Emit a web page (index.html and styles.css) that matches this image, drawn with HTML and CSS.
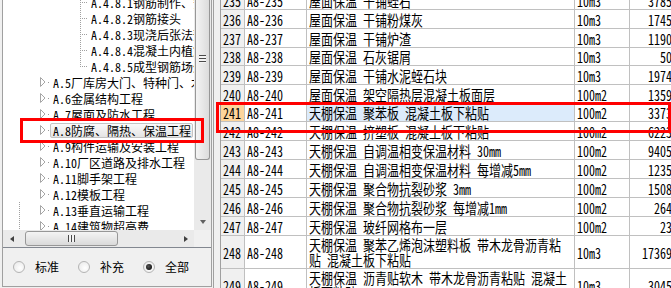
FILE: index.html
```html
<!DOCTYPE html>
<html lang="zh-CN">
<head>
  <meta charset="UTF-8" />
  <title>定额库</title>
  <link rel="stylesheet" href="styles.css">
</head>
<body>

<div class="app">
  <aside class="side">
    <div class="side-box">
      <div class="tree">
        <div class="tree-view">
          <ul class="tree-list">
            <li class="lv3"><i class="join"></i><span class="label">A.4.8.1钢筋制作、安装</span></li>
            <li class="lv3"><i class="join"></i><span class="label">A.4.8.2钢筋接头</span></li>
            <li class="lv3"><i class="join"></i><span class="label">A.4.8.3现浇后张法预应力钢筋</span></li>
            <li class="lv3"><i class="join"></i><span class="label">A.4.8.4混凝土内植筋</span></li>
            <li class="lv3 last"><i class="join"></i><span class="label">A.4.8.5成型钢筋场外运输</span></li>
            <li class="lv1"><svg class="twisty" width="14" height="16"><path d="M4.5 3.5v9l4.5-4.5z" fill="#fff" stroke="#a6a6a6"/><rect x="12" y="8" width="1" height="1" fill="#9a9a9a"/></svg><span class="label">A.5厂库房大门、特种门、木结构工程</span></li>
            <li class="lv1"><svg class="twisty" width="14" height="16"><path d="M4.5 3.5v9l4.5-4.5z" fill="#fff" stroke="#a6a6a6"/><rect x="12" y="8" width="1" height="1" fill="#9a9a9a"/></svg><span class="label">A.6金属结构工程</span></li>
            <li class="lv1"><svg class="twisty" width="14" height="16"><path d="M4.5 3.5v9l4.5-4.5z" fill="#fff" stroke="#a6a6a6"/><rect x="12" y="8" width="1" height="1" fill="#9a9a9a"/></svg><span class="label">A.7屋面及防水工程</span></li>
            <li class="lv1"><svg class="twisty" width="14" height="16"><path d="M4.5 3.5v9l4.5-4.5z" fill="#fff" stroke="#a6a6a6"/><rect x="12" y="8" width="1" height="1" fill="#9a9a9a"/></svg><span class="label sel">A.8防腐、隔热、保温工程</span></li>
            <li class="lv1"><svg class="twisty" width="14" height="16"><path d="M4.5 3.5v9l4.5-4.5z" fill="#fff" stroke="#a6a6a6"/><rect x="12" y="8" width="1" height="1" fill="#9a9a9a"/></svg><span class="label">A.9构件运输及安装工程</span></li>
            <li class="lv1"><svg class="twisty" width="14" height="16"><path d="M4.5 3.5v9l4.5-4.5z" fill="#fff" stroke="#a6a6a6"/><rect x="12" y="8" width="1" height="1" fill="#9a9a9a"/></svg><span class="label">A.10厂区道路及排水工程</span></li>
            <li class="lv1"><svg class="twisty" width="14" height="16"><path d="M4.5 3.5v9l4.5-4.5z" fill="#fff" stroke="#a6a6a6"/><rect x="12" y="8" width="1" height="1" fill="#9a9a9a"/></svg><span class="label">A.11脚手架工程</span></li>
            <li class="lv1"><svg class="twisty" width="14" height="16"><path d="M4.5 3.5v9l4.5-4.5z" fill="#fff" stroke="#a6a6a6"/><rect x="12" y="8" width="1" height="1" fill="#9a9a9a"/></svg><span class="label">A.12模板工程</span></li>
            <li class="lv1 root-line"><svg class="twisty" width="14" height="16"><path d="M4.5 3.5v9l4.5-4.5z" fill="#fff" stroke="#a6a6a6"/><rect x="12" y="8" width="1" height="1" fill="#9a9a9a"/></svg><span class="label">A.13垂直运输工程</span></li>
            <li class="lv1 root-line"><svg class="twisty" width="14" height="16"><path d="M4.5 3.5v9l4.5-4.5z" fill="#fff" stroke="#a6a6a6"/><rect x="12" y="8" width="1" height="1" fill="#9a9a9a"/></svg><span class="label">A.14建筑物超高费</span></li>
          </ul>
        </div>
        <div class="vscroll">
          <div class="vthumb"><span class="grip-h"></span></div>
          <div class="vtrack"></div>
          <div class="sbtn"><i class="arr down"></i></div>
        </div>
        <div class="hscroll">
          <div class="sbtn"><i class="arr left"></i></div>
          <div class="htrack"><div class="hthumb"><span class="grip-v"></span></div></div>
          <div class="sbtn"><i class="arr right"></i></div>
        </div>
        <div class="corner"></div>
      </div>
      <div class="filter">
        <label class="radio"><i class="dot"></i>标准</label>
        <label class="radio"><i class="dot"></i>补充</label>
        <label class="radio"><i class="dot on"></i>全部</label>
      </div>
    </div>
  </aside>

  <div class="split"></div>

  <div class="grid-wrap">
    <table class="grid">
      <colgroup>
        <col class="c-no"><col class="c-code"><col class="c-name"><col class="c-unit"><col class="c-price">
      </colgroup>
      <tr><td class="no"><span class="t">235</span></td><td><span class="t">A8-235</span></td><td><span class="t">屋面保温 干铺蛭石</span></td><td><span class="t">10m3</span></td><td class="price"><span class="t">3785.64</span></td></tr>
      <tr><td class="no"><span class="t">236</span></td><td><span class="t">A8-236</span></td><td><span class="t">屋面保温 干铺粉煤灰</span></td><td><span class="t">10m3</span></td><td class="price"><span class="t">1745.22</span></td></tr>
      <tr><td class="no"><span class="t">237</span></td><td><span class="t">A8-237</span></td><td><span class="t">屋面保温 干铺炉渣</span></td><td><span class="t">10m3</span></td><td class="price"><span class="t">1190.35</span></td></tr>
      <tr class="short"><td class="no"><span class="t">238</span></td><td><span class="t">A8-238</span></td><td><span class="t">屋面保温 石灰锯屑</span></td><td><span class="t">10m3</span></td><td class="price"><span class="t">50.87</span></td></tr>
      <tr><td class="no"><span class="t">239</span></td><td><span class="t">A8-239</span></td><td><span class="t">屋面保温 干铺水泥蛭石块</span></td><td><span class="t">10m3</span></td><td class="price"><span class="t">1974.08</span></td></tr>
      <tr><td class="no"><span class="t">240</span></td><td><span class="t">A8-240</span></td><td><span class="t">屋面保温 架空隔热层混凝土板面层</span></td><td><span class="t">100m2</span></td><td class="price"><span class="t">1359.71</span></td></tr>
      <tr class="short cur"><td class="no"><span class="t">241</span></td><td><span class="t">A8-241</span></td><td class="name"><span class="t">天棚保温 聚苯板 混凝土板下粘贴</span></td><td><span class="t">100m2</span></td><td class="price"><span class="t">3373.16</span></td></tr>
      <tr><td class="no"><span class="t">242</span></td><td><span class="t">A8-242</span></td><td><span class="t">天棚保温 挤塑板 混凝土板下粘贴</span></td><td><span class="t">100m2</span></td><td class="price"><span class="t">6223.40</span></td></tr>
      <tr><td class="no"><span class="t">243</span></td><td><span class="t">A8-243</span></td><td><span class="t">天棚保温 自调温相变保温材料 30mm</span></td><td><span class="t">100m2</span></td><td class="price"><span class="t">9405.52</span></td></tr>
      <tr><td class="no"><span class="t">244</span></td><td><span class="t">A8-244</span></td><td><span class="t">天棚保温 自调温相变保温材料 每增减5mm</span></td><td><span class="t">100m2</span></td><td class="price"><span class="t">1235.93</span></td></tr>
      <tr><td class="no"><span class="t">245</span></td><td><span class="t">A8-245</span></td><td><span class="t">天棚保温 聚合物抗裂砂浆 3mm</span></td><td><span class="t">100m2</span></td><td class="price"><span class="t">1508.27</span></td></tr>
      <tr><td class="no"><span class="t">246</span></td><td><span class="t">A8-246</span></td><td><span class="t">天棚保温 聚合物抗裂砂浆 每增减1mm</span></td><td><span class="t">100m2</span></td><td class="price"><span class="t">264.18</span></td></tr>
      <tr><td class="no"><span class="t">247</span></td><td><span class="t">A8-247</span></td><td><span class="t">天棚保温 玻纤网格布一层</span></td><td><span class="t">100m2</span></td><td class="price"><span class="t">23.46</span></td></tr>
      <tr class="tall"><td class="no"><span class="t">248</span></td><td><span class="t">A8-248</span></td><td><span class="t">天棚保温 聚苯乙烯泡沫塑料板 带木龙骨沥青粘<br>贴 混凝土板下粘贴</span></td><td><span class="t">10m3</span></td><td class="price"><span class="t">17369.05</span></td></tr>
      <tr class="tall"><td class="no"><span class="t">249</span></td><td><span class="t">A8-249</span></td><td><span class="t">天棚保温 沥青贴软木 带木龙骨沥青粘贴 混凝土<br>板下粘贴</span></td><td><span class="t">10m3</span></td><td class="price"><span class="t">3045.81</span></td></tr>
    </table>
  </div>

  <div class="mark mark-tree"></div>
  <div class="mark mark-row"></div>
</div>

</body>
</html>
```

FILE: styles.css
```css
html, body {
  margin: 0;
  height: 100%;
  overflow: hidden;
}

body {
  background: #f0f0f0;
  color: #000;
  font-family: "Noto Sans Mono CJK SC", "Noto Sans CJK SC", "DejaVu Sans Mono", monospace;
  font-size: 12px;
}

.app {
  position: relative;
  display: flex;
  width: 671px;
  height: 288px;
  overflow: hidden;
}

/* left panel */
.side {
  flex: none;
  width: 214px;
  padding-left: 2px;
  box-sizing: border-box;
  border-right: 1px solid #a0a0a0;
}

.side-box {
  width: 210px;
  height: 287px;
  box-sizing: border-box;
  border: 1px solid #a0a0a0;
  border-top: 0;
  display: flex;
  flex-direction: column;
}

.tree {
  display: grid;
  grid-template-columns: 1fr 17px;
  grid-template-rows: 230px 17px;
  background: #fff;
  border-bottom: 1px solid #828790;
}

.tree-view {
  overflow: hidden;
}

.tree-list {
  list-style: none;
  margin: -6px 0 0;
  padding: 0;
}

.tree-list li {
  display: flex;
  align-items: center;
  height: 16px;
  white-space: nowrap;
}

.lv1 {
  padding-left: 33px;
}

.lv3 {
  padding-left: 71px;
}

.twisty {
  flex: none;
  display: block;
}

.join {
  flex: none;
  width: 14px;
  height: 16px;
  background:
    repeating-linear-gradient(to bottom, #a0a0a0 0 1px, transparent 1px 2px) 6px 0 / 1px 100% no-repeat,
    repeating-linear-gradient(to right, #a0a0a0 0 1px, transparent 1px 2px) 6px 8px / 8px 1px no-repeat;
}

.last .join {
  background-size: 1px 9px, 8px 1px;
}

.root-line {
  background: repeating-linear-gradient(to bottom, #a0a0a0 0 1px, transparent 1px 2px) 16px 0 / 1px 100% no-repeat;
}

.label {
  border: 1px solid transparent;
  border-radius: 2px;
  padding: 0 1px 0 2px;
  line-height: 13px;
}

.label.sel {
  border-color: #c4c4c4;
  background: linear-gradient(#fafafa, #e4e4e4);
}

/* scrollbars */
.vscroll {
  display: flex;
  flex-direction: column;
  background: #eaeaea;
}

.vthumb {
  height: 160px;
  margin: 0 1px;
  box-sizing: border-box;
  border: 1px solid #979797;
  border-top: 0;
  border-radius: 0 0 3px 3px;
  background: linear-gradient(to right, #f4f4f4, #dcdcdc);
  display: flex;
  justify-content: center;
}

.grip-h {
  width: 7px;
  height: 8px;
  margin-top: 55px;
  background: repeating-linear-gradient(to bottom, #4a4a4a 0 1px, #f4f4f4 1px 3px);
}

.vtrack {
  flex: 1;
}

.sbtn {
  flex: none;
  width: 17px;
  height: 17px;
  display: flex;
  align-items: center;
  justify-content: center;
}

.arr {
  width: 0;
  height: 0;
  border: 3px solid transparent;
}

.arr.down {
  border-top: 4px solid #606060;
  border-bottom: 0;
}

.arr.left {
  border-right: 4px solid #404040;
  border-left: 0;
}

.arr.right {
  border-left: 4px solid #404040;
  border-right: 0;
}

.hscroll {
  display: flex;
  background: #eaeaea;
}

.htrack {
  flex: 1;
  padding: 1px 0;
}

.hthumb {
  width: 93px;
  height: 15px;
  margin-left: 5px;
  box-sizing: border-box;
  border: 1px solid #979797;
  border-radius: 3px;
  background: linear-gradient(#f4f4f4, #dadada);
  display: flex;
  align-items: center;
  justify-content: center;
}

.grip-v {
  width: 7px;
  height: 7px;
  background: repeating-linear-gradient(to right, #4a4a4a 0 1px, #f4f4f4 1px 3px);
}

.corner {
  background: #f0f0f0;
}

/* radio filter */
.filter {
  flex: 1;
  display: flex;
  align-items: center;
  padding-left: 10px;
}

.radio {
  width: 65px;
  display: flex;
  align-items: center;
  line-height: 14px;
}

.dot {
  position: relative;
  width: 12px;
  height: 12px;
  margin-right: 10px;
  box-sizing: border-box;
  border: 1px solid #b4b4b4;
  border-radius: 50%;
  background: radial-gradient(circle at 60% 60%, #fff, #e6e6e6);
}

.dot.on::after {
  content: "";
  position: absolute;
  left: 2px;
  top: 2px;
  width: 6px;
  height: 6px;
  border-radius: 50%;
  background: radial-gradient(circle at 40% 40%, #555, #000);
}

/* grid */
.split {
  flex: none;
  width: 6px;
}

.grid-wrap {
  flex: 1;
  min-width: 0;
  background: #fff;
  border-left: 1px solid #a0a0a0;
  overflow: hidden;
}

.grid {
  border-collapse: separate;
  border-spacing: 0;
  table-layout: fixed;
  width: 479px;
  margin-top: -9px;
}

.c-no { width: 24px; }
.c-code { width: 62px; }
.c-name { width: 268px; }
.c-unit { width: 55px; }
.c-price { width: 70px; }

.grid td {
  height: 18px;
  padding: 0 2px;
  border-right: 1px solid #c0c0c0;
  border-bottom: 1px solid #c0c0c0;
  line-height: 13px;
  white-space: nowrap;
  overflow: hidden;
}

.grid .short td {
  height: 17px;
}

.grid .tall td {
  height: 32px;
}

.grid td.no {
  background: #f0f0f0;
}

.grid .cur td.no {
  background: #fdd59b;
}

.grid .cur td.name {
  background: #dcebfb;
}

.grid td.price {
  text-align: right;
  padding-right: 9px;
}

.t {
  display: inline-block;
  transform: scaleY(1.2);
}

/* red annotation boxes */
.mark {
  position: absolute;
  box-sizing: border-box;
  border: 3px solid #f00;
}

.mark-tree {
  left: 20px;
  top: 118px;
  width: 184px;
  height: 25px;
}

.mark-row {
  left: 216px;
  top: 102px;
  width: 455px;
  height: 31px;
}
```
